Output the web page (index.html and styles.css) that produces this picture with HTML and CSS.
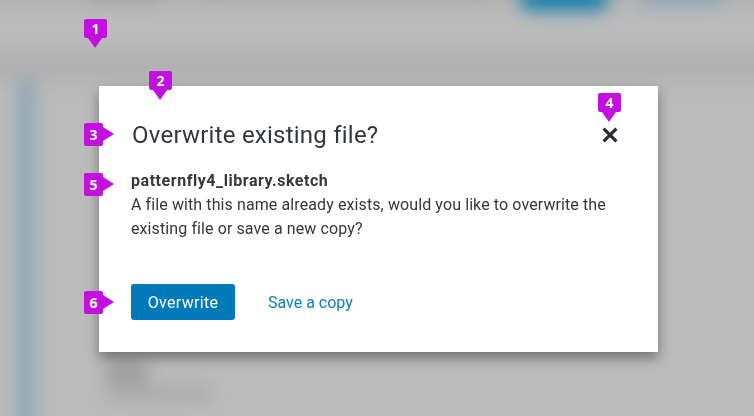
FILE: index.html
```html
<!DOCTYPE html>
<html lang="en">
<head>
<meta charset="utf-8">
<title>Overwrite existing file?</title>
<link rel="stylesheet" href="styles.css">
</head>
<body>
<div class="stage">
  <div class="backdrop" aria-hidden="true">
    <div class="blob top-band"></div>
    <div class="blob top-text-a"></div>
    <div class="blob top-text-b"></div>
    <div class="blob primary"></div>
    <div class="blob secondary"></div>
    <div class="blob mid-band"></div>
    <div class="blob rail"></div>
    <div class="blob foot-a"></div>
    <div class="blob foot-b"></div>
  </div>
  <div class="overlay">
    <section class="modal">
      <header class="modal-head">
        <h1 class="modal-title">Overwrite existing file?</h1>
        <svg class="close" viewBox="0 0 16 16" aria-label="Close"><path d="M1.6 1.6 14.4 14.4M14.4 1.6 1.6 14.4"/></svg>
      </header>
      <div class="modal-body">
        <strong class="file-name">patternfly4_library.sketch</strong>
        <p class="message">A file with this name already exists, would you like to overwrite the existing file or save a new copy?</p>
      </div>
      <footer class="modal-foot">
        <button class="btn-primary">Overwrite</button>
        <a class="btn-link">Save a copy</a>
      </footer>
    </section>
  </div>
  <span class="badge down b1">1</span>
  <span class="badge down b2">2</span>
  <span class="badge side b3">3</span>
  <span class="badge down b4">4</span>
  <span class="badge side b5">5</span>
  <span class="badge side b6">6</span>
</div>
</body>
</html>
```

FILE: styles.css
```css
* { box-sizing: border-box; }
html, body { margin: 0; padding: 0; }
body { font-family: Roboto, "Liberation Sans", sans-serif; color: #33383e; }

.stage { position: relative; width: 754px; height: 416px; overflow: hidden; background: #bcbcbc; }

.backdrop { position: absolute; inset: 0; filter: blur(9px); }
.blob { position: absolute; }
.top-band { left: -20px; top: -20px; width: 800px; height: 22px; background: #aaaaaa; }
.top-text-a { left: 90px; top: -8px; width: 70px; height: 12px; background: #a0a0a0; }
.top-text-b { left: 200px; top: -8px; width: 290px; height: 11px; background: #a6a6a6; }
.primary { left: 522px; top: -12px; width: 84px; height: 22px; background: #0a78aa; }
.secondary { left: 640px; top: -12px; width: 84px; height: 19px; background: #90a8b4; }
.mid-band { left: -20px; top: 50px; width: 800px; height: 32px; background: #b0b0b0; }
.rail { left: 16px; top: 80px; width: 20px; height: 360px; background: #92a9b5; }
.foot-a { left: 106px; top: 366px; width: 42px; height: 14px; background: #8e8e8e; }
.foot-b { left: 106px; top: 388px; width: 105px; height: 11px; background: #a2a2a2; }

.overlay { position: absolute; inset: 0; display: flex; align-items: flex-start; padding: 86px 0 0 99px; }

.modal { width: 559px; height: 266px; background: #fff; padding: 31px 32px 32px; display: flex; flex-direction: column; box-shadow: 0 6px 12px rgba(0, 0, 0, .4); }

.modal-head { display: flex; justify-content: space-between; align-items: center; height: 36px; }
.modal-title { margin: 0 0 0 1px; font-size: 24px; line-height: 36px; font-weight: 400; letter-spacing: .23px; color: #33383e; }
.close { width: 16px; height: 16px; margin-right: 8px; margin-top: 0; }
.close path { fill: none; stroke: #282d33; stroke-width: 3.2; }

.modal-body { margin-top: 16px; font-size: 16px; line-height: 24px; }
.file-name { display: block; font-weight: 700; letter-spacing: .54px; }
.message { margin: 0; letter-spacing: .1px; }

.modal-foot { margin-top: auto; display: flex; align-items: center; gap: 33px; }
.btn-primary { width: 104px; height: 36px; border: 0; border-radius: 3px; background: #007ab9; color: #fff; font: 400 16px Roboto, sans-serif; letter-spacing: .3px; padding: 0; }
.btn-link { font-size: 16px; letter-spacing: 0; color: #0a80bd; }

.badge { position: absolute; background: #c30fdf; color: #fff; font: 700 14px/1 "Open Sans", sans-serif; display: flex; align-items: center; justify-content: center; border-radius: 2px; }
.badge::after { content: ""; position: absolute; }
.down { width: 23px; height: 19px; }
.down::after { left: 4px; top: 19px; border-style: solid; border-width: 10px 7.5px 0; border-color: #c30fdf transparent transparent; }
.side { width: 19px; height: 23px; }
.side::after { left: 19px; top: 4px; border-style: solid; border-width: 7.5px 0 7.5px 11px; border-color: transparent transparent transparent #c30fdf; }
.b1 { left: 84px; top: 19px; }
.b2 { left: 149px; top: 71px; }
.b3 { left: 84px; top: 123px; }
.b4 { left: 598px; top: 93px; }
.b5 { left: 84px; top: 173px; }
.b6 { left: 84px; top: 291px; }
```
